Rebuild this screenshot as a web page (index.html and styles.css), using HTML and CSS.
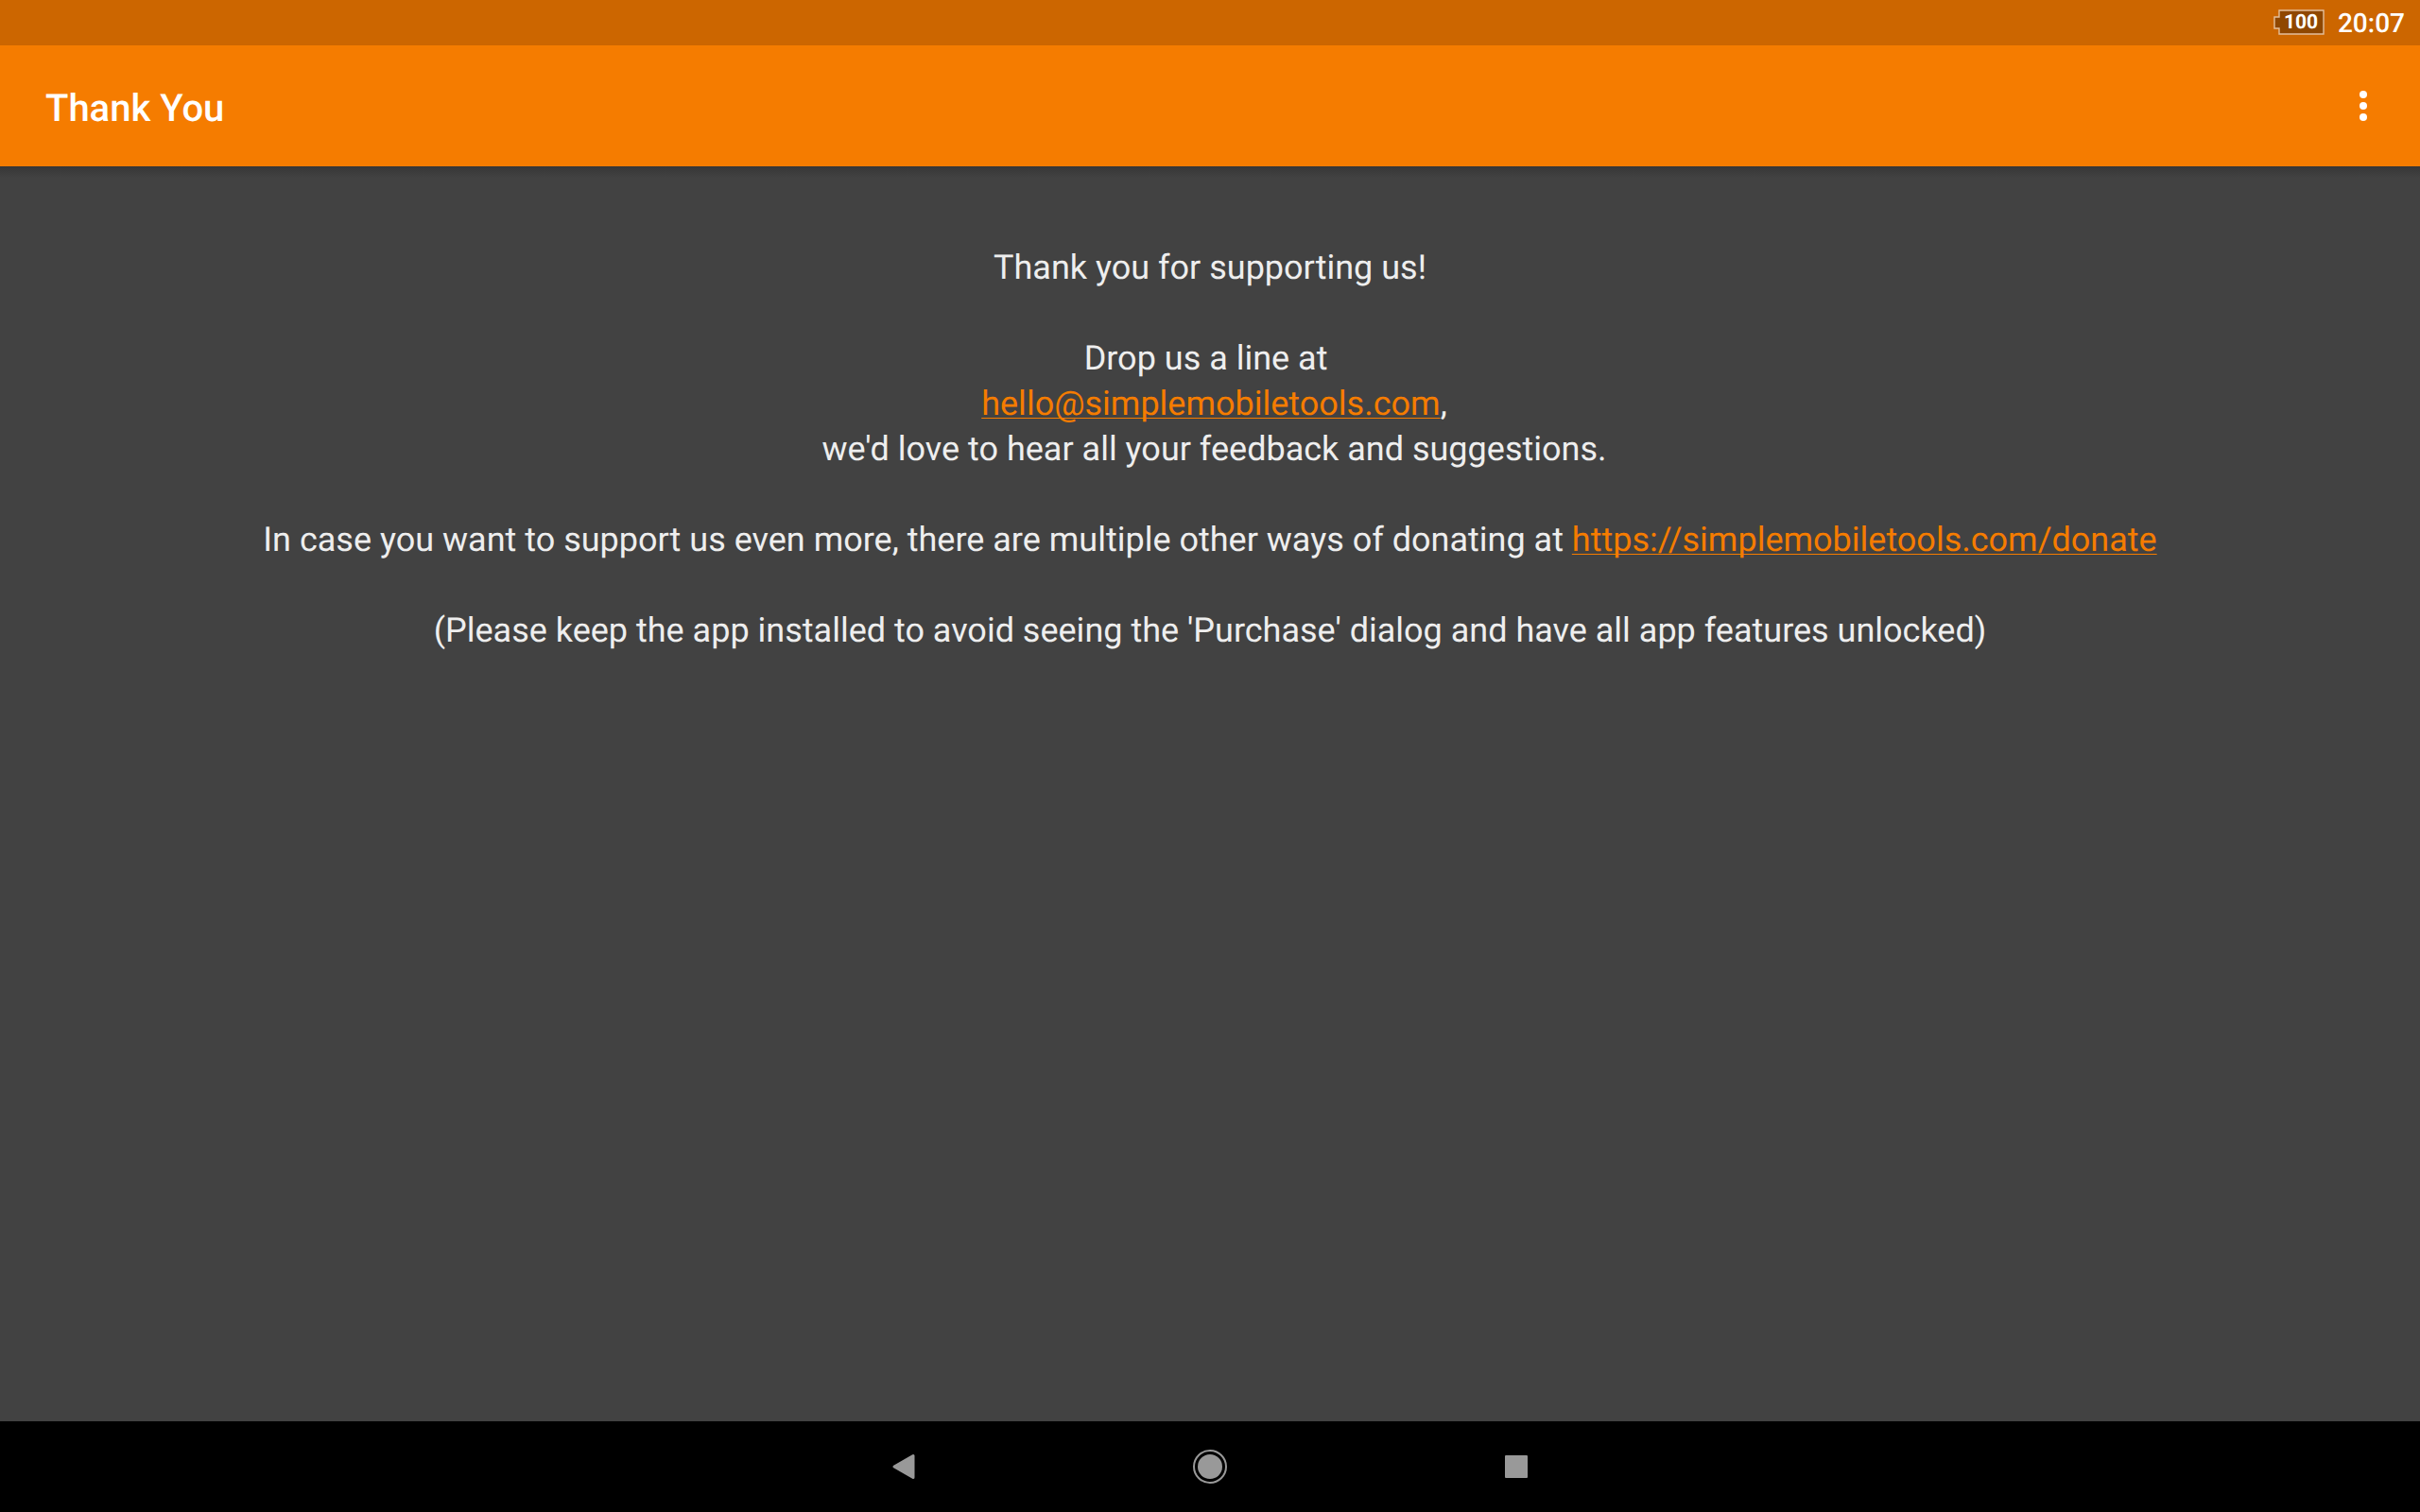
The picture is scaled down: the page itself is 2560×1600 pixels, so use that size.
FILE: index.html
```html
<!DOCTYPE html>
<html lang="en">
<head>
<meta charset="utf-8">
<title>Thank You</title>
<link rel="stylesheet" href="styles.css">
</head>
<body>
<div class="status-bar">
  <svg class="battery" viewBox="0 0 54 28" aria-hidden="true"><path d="M6 1H53V26H6V20H1V8H6Z" fill="#8f4700" stroke="#e3bf9c" stroke-width="1.4"/></svg>
  <span class="battery-level">100</span>
  <time class="clock">20:07</time>
</div>
<header class="app-bar">
  <h1 class="app-title">Thank You</h1>
  <button class="icon-button" aria-label="More options"><svg width="48" height="48" viewBox="0 0 24 24" fill="#fff"><circle cx="12" cy="6" r="2"/><circle cx="12" cy="12" r="2"/><circle cx="12" cy="18" r="2"/></svg></button>
</header>
<main class="content">
  <p>Thank you for supporting us!</p>
  <p>Drop us a line at&nbsp;<br>&nbsp;<a href="mailto:hello@simplemobiletools.com">hello@simplemobiletools.com</a>,<br>&nbsp;we'd love to hear all your feedback and suggestions.</p>
  <p>In case you want to support us even more, there are multiple other ways of donating at <a href="https://simplemobiletools.com/donate">https://simplemobiletools.com/donate</a></p>
  <p>(Please keep the app installed to avoid seeing the 'Purchase' dialog and have all app features unlocked)</p>
</main>
<nav class="nav-bar">
  <button class="nav-button" aria-label="Back"><svg width="48" height="48" viewBox="0 0 48 48"><path d="M34 12.5V35.5L14 24Z" fill="#999" stroke="#999" stroke-width="3" stroke-linejoin="round"/></svg></button>
  <button class="nav-button" aria-label="Home"><svg width="48" height="48" viewBox="0 0 48 48"><circle cx="24" cy="24" r="13" fill="#999"/><circle cx="24" cy="24" r="17" fill="none" stroke="#999" stroke-width="2"/></svg></button>
  <button class="nav-button" aria-label="Recent apps"><svg width="48" height="48" viewBox="0 0 48 48"><rect x="12" y="12" width="24" height="24" rx="1" fill="#999"/></svg></button>
</nav>
</body>
</html>
```
FILE: styles.css
```css
* { box-sizing: border-box; }
body {
  margin: 0;
  min-height: 100vh;
  display: flex;
  flex-direction: column;
  background: #424242;
  color: #fff;
  font-family: Roboto, sans-serif;
  text-rendering: geometricPrecision;
}
.status-bar {
  height: 48px;
  padding-right: 16px;
  display: flex;
  align-items: center;
  justify-content: flex-end;
  background: #cc6600;
}
.battery { width: 54px; height: 28px; }
.battery-level {
  width: 48px;
  margin-left: -48px;
  padding-right: 2px;
  text-align: center;
  font-size: 21px;
  font-weight: 700;
  line-height: 28px;
}
.clock { margin-left: 14px; padding-top: 2px; font-size: 28px; font-weight: 500; line-height: 48px; }
.app-bar {
  height: 128px;
  padding: 0 24px 0 48px;
  display: flex;
  align-items: center;
  justify-content: space-between;
  background: #f57c00;
}
.app-title { margin: 0; padding-top: 4px; font-size: 40px; font-weight: 500; }
button { padding: 0; border: 0; background: none; cursor: pointer; }
.icon-button { width: 72px; height: 96px; display: grid; place-items: center; }
.content {
  flex: 1;
  padding: 83px 64px;
  background: linear-gradient(#363636, #424242) no-repeat top / 100% 12px;
  text-align: center;
  font-size: 36px;
  line-height: 48px;
  color: #eee;
}
.content p { margin: 0 0 48px; }
.content a {
  color: #f57c00;
  text-decoration-thickness: 1px;
  text-underline-offset: 3px;
  text-decoration-skip-ink: none;
}
.nav-bar {
  height: 96px;
  display: flex;
  align-items: center;
  justify-content: center;
  gap: 164px;
  background: #000;
}
.nav-button { width: 160px; height: 96px; display: grid; place-items: center; }
```
